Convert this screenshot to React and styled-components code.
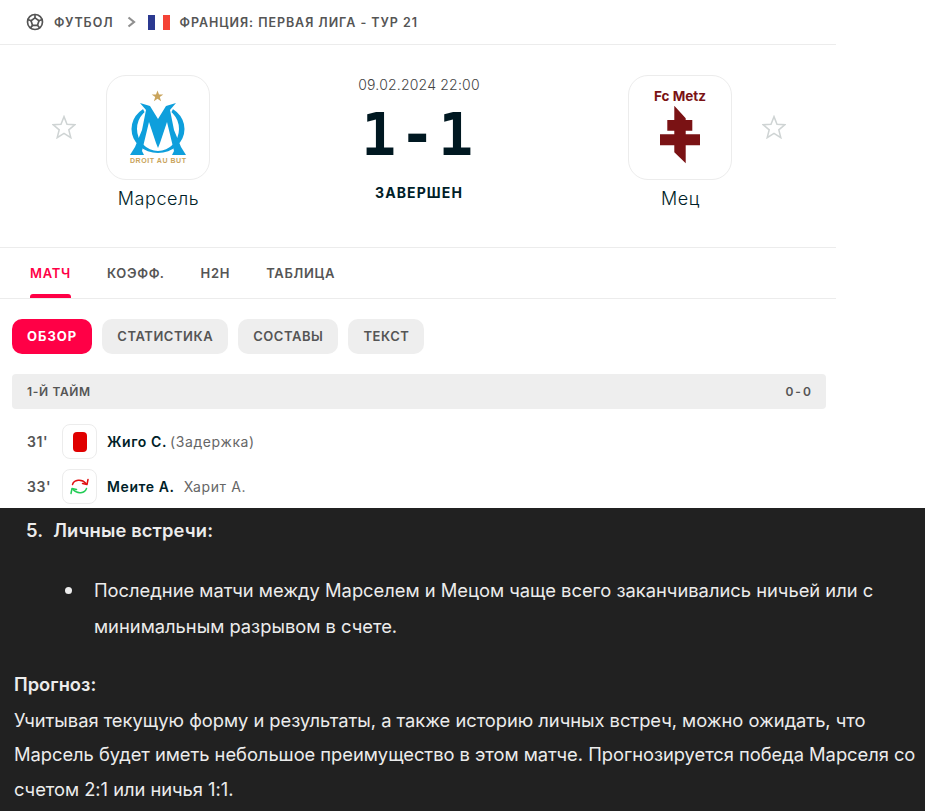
import React from 'react'
import styled, { createGlobalStyle } from 'styled-components'
import { TbBallFootball } from 'react-icons/tb'

const GlobalStyle = createGlobalStyle`
    html, body {
        margin: 0;
        padding: 0;
        background: #fff;
    }
    * {
        box-sizing: border-box;
    }
`

const Page = styled.div`
    width: 925px;
    height: 811px;
    overflow: hidden;
    display: flex;
    flex-direction: column;
    font-family: Inter, "Noto Sans", sans-serif;
`

const Widget = styled.div`
    width: 836px;
    height: 508px;
    flex: none;
    overflow: hidden;
    color: #001e28;
`

const Breadcrumb = styled.div`
    height: 45px;
    padding-left: 25px;
    display: flex;
    align-items: center;
    border-bottom: 1px solid #ececec;
    font-size: 12.5px;
    font-weight: 600;
    letter-spacing: 0.95px;
    color: #555;
    svg {
        flex: none;
    }
`

const CrumbText = styled.span`
    margin-left: ${p => p.$left}px;
`

const Chevron = styled.svg`
    width: 9px;
    height: 12px;
    margin-left: 13px;
`

const Flag = styled.div`
    width: 22px;
    height: 15px;
    margin-left: 12px;
    background: linear-gradient(90deg, #2b3990 33.3%, #fff 33.3%, #fff 66.6%, #f44336 66.6%);
`

const MatchHeader = styled.div`
    height: 203px;
    padding: 30px 50px 0 52px;
    display: flex;
    border-bottom: 1px solid #ececec;
`

const Team = styled.div`
    display: flex;
    align-items: flex-start;
    gap: 30px;
`

const StarBox = styled.div`
    width: 24px;
    height: 24px;
    margin-top: 40px;
    flex: none;
`

const TeamInfo = styled.div`
    width: 104px;
    display: flex;
    flex-direction: column;
    align-items: center;
`

const LogoBox = styled.div`
    width: 104px;
    height: 105px;
    border: 1px solid #ececec;
    border-radius: 20px;
    background: #fff;
`

const TeamName = styled.div`
    margin-top: 8px;
    padding-left: 1px;
    font-size: 18px;
    font-weight: 300;
    line-height: 22px;
    letter-spacing: 0.55px;
    white-space: nowrap;
`

const Center = styled.div`
    flex: 1;
    display: flex;
    flex-direction: column;
    align-items: center;
`

const DateText = styled.div`
    font-size: 14px;
    font-weight: 300;
    line-height: 20px;
    letter-spacing: 0.2px;
    color: #444;
`

const Score = styled.div`
    font-family: "DejaVu Sans Mono", monospace;
    font-size: 58px;
    font-weight: 700;
    line-height: 70px;
    margin-top: 5px;
    letter-spacing: 3.5px;
    color: #001821;
`

const Status = styled.div`
    margin-top: 14px;
    font-size: 14px;
    font-weight: 700;
    line-height: 18px;
    letter-spacing: 1.1px;
`

const Tabs = styled.div`
    height: 51px;
    padding-left: 12px;
    display: flex;
    border-bottom: 1px solid #ececec;
`

const Tab = styled.div`
    position: relative;
    padding: 0 18px;
    line-height: 50px;
    font-size: 13px;
    font-weight: 600;
    letter-spacing: 0.7px;
    color: ${p => (p.$active ? '#ff0046' : '#555')};
    ${p => p.$active && `
        &:after {
            content: '';
            position: absolute;
            left: 18px;
            right: 18px;
            bottom: 0;
            height: 4px;
            border-radius: 3px 3px 0 0;
            background: #ff0046;
        }
    `}
`

const Pills = styled.div`
    padding: 20px 12px;
    display: flex;
    gap: 10px;
`

const Pill = styled.div`
    height: 35px;
    padding: 0 15px;
    border-radius: 10px;
    line-height: 35px;
    font-size: 13px;
    font-weight: ${p => (p.$active ? 700 : 600)};
    letter-spacing: ${p => (p.$active ? '1px' : '0.55px')};
    color: ${p => (p.$active ? '#fff' : '#555')};
    background: ${p => (p.$active ? '#ff0046' : '#eee')};
`

const PeriodBar = styled.div`
    width: 814px;
    height: 35px;
    margin-left: 12px;
    padding: 0 15px;
    display: flex;
    align-items: center;
    justify-content: space-between;
    border-radius: 4px;
    background: #eee;
    font-size: 12px;
    font-weight: 600;
    letter-spacing: 0.65px;
    color: #555;
`

const PeriodScore = styled.span`
    letter-spacing: 0.2px;
    word-spacing: -1.5px;
`

const Events = styled.div`
    padding: 15px 0 0 27px;
    display: flex;
    flex-direction: column;
    gap: 10px;
`

const EventRow = styled.div`
    height: 35px;
    display: flex;
    align-items: center;
    font-size: 14px;
    letter-spacing: 0.6px;
`

const Minute = styled.div`
    width: 35px;
    font-weight: 600;
    color: #555;
`

const EventIcon = styled.div`
    width: 35px;
    height: 35px;
    margin-right: 10px;
    display: flex;
    align-items: center;
    justify-content: center;
    border: 1px solid #ececec;
    border-radius: 8px;
`

const RedCard = styled.div`
    width: 14px;
    height: 20px;
    border-radius: 4px;
    background: #e00000;
`

const Player = styled.span`
    font-weight: 600;
`

const Note = styled.span`
    margin-left: ${p => p.$left}px;
    color: #666;
`

const Answer = styled.div`
    flex: 1;
    padding: 4px 0 0 14px;
    overflow: hidden;
    background: #212121;
    color: #ececec;
    font-size: 18.33px;
    line-height: 36px;
`

const NumberedItem = styled.div`
    height: 42px;
    padding-left: 12px;
    display: flex;
    gap: 10px;
    font-weight: 600;
    letter-spacing: 0.15px;
`

const BulletItem = styled.div`
    position: relative;
    margin: 18px 0 23px;
    padding-left: 80px;
    &:before {
        content: '';
        position: absolute;
        left: 51px;
        top: 15px;
        width: 7px;
        height: 7px;
        border-radius: 50%;
        background: #ececec;
    }
`

const Paragraph = styled.div`
    line-height: 34.5px;
    letter-spacing: -0.03px;
    white-space: nowrap;
`

const Strong = styled.div`
    font-weight: 600;
    line-height: 35.5px;
`

const Star = () => (
    <svg width="24" height="24" viewBox="0 0 24 24" fill="none" stroke="#cfd4d4" strokeWidth="1.5">
        <path d="M12 1.600l3 7.600 8 .5-6.200 5.100 2 7.900L12 18.400l-6.800 4.300 2-7.900L1 9.700l8-.5z" />
    </svg>
)

const MarseilleLogo = () => (
    <svg width="102" height="103" viewBox="1 1 102 103">
        <path fill="#c9a45c" d="M51.500 15.500l1.500 4h4.300l-3.500 2.600 1.300 4.200-3.600-2.600-3.600 2.600 1.300-4.200-3.500-2.600h4.300z" />
        <path
            fill="#0e9fdc"
            fillRule="evenodd"
            d="M25.500 54a26.500 24 0 1 0 53 0a26.500 24 0 1 0-53 0zM31 54a21 22 0 1 1 42 0a21 22 0 1 1-42 0z"
        />
        <path fill="#fff" d="M35 30L69 30 64 40 40 40z" />
        <path
            fill="#0e9fdc"
            d="M34 28L44 31 52 44 60 31 70 28 64 35 68 55 75 72 80 80 66 80 68 76 61 47 54 68 52 73 50 68 43 47 36 76 38 80 24 80 29 72 36 55 40 35z"
        />
        <text x="52" y="87.500" textAnchor="middle" textLength="56" fontFamily="Liberation Sans, sans-serif" fontSize="7" fontWeight="700" fill="#c9a45c">DROIT AU BUT</text>
    </svg>
)

const MetzLogo = () => (
    <svg width="102" height="103" viewBox="1 1 102 103">
        <text x="52" y="26" textAnchor="middle" fontFamily="Inter, sans-serif" fontSize="13.500" fontWeight="700" fill="#7a1214">Fc Metz</text>
        <path fill="#7a1214" d="M46.300 30.700L57.700 43.300V45H64.300V55.700H57.700V59.300H72V70.300H57.700V88.300L46.300 77.300V70.300H32V59.300H46.300V55.700H39.300V45H46.300z" />
    </svg>
)

const SubIcon = () => (
    <svg width="21" height="21" viewBox="0 0 21 21" fill="none" strokeWidth="1.500" strokeLinecap="round" strokeLinejoin="round">
        <path stroke="#e01010" d="M3.500 8.500C5 3.800 12.500 2.500 17 7.500" />
        <path stroke="#e01010" d="M19 3.500L18 8.500L13.500 7.500" />
        <path stroke="#22cc55" d="M17.500 12.500C16 17.200 8.500 18.500 4 13.500" />
        <path stroke="#22cc55" d="M2 17.500L3 12.500L7.500 13.500" />
    </svg>
)

const App = () => {
    return (
        <Page>
            <GlobalStyle />
            <Widget>
                <Breadcrumb>
                    <TbBallFootball size={20} color="#555" />
                    <CrumbText $left={9}>ФУТБОЛ</CrumbText>
                    <Chevron viewBox="0 0 9 12" fill="none" stroke="#8f8f8f" strokeWidth="2.200">
                        <path d="M1.500 1.500L7 6L1.500 10.500" />
                    </Chevron>
                    <Flag />
                    <CrumbText $left={10}>ФРАНЦИЯ: ПЕРВАЯ ЛИГА - ТУР 21</CrumbText>
                </Breadcrumb>
                <MatchHeader>
                    <Team>
                        <StarBox><Star /></StarBox>
                        <TeamInfo>
                            <LogoBox><MarseilleLogo /></LogoBox>
                            <TeamName>Марсель</TeamName>
                        </TeamInfo>
                    </Team>
                    <Center>
                        <DateText>09.02.2024 22:00</DateText>
                        <Score>1-1</Score>
                        <Status>ЗАВЕРШЕН</Status>
                    </Center>
                    <Team>
                        <TeamInfo>
                            <LogoBox><MetzLogo /></LogoBox>
                            <TeamName>Мец</TeamName>
                        </TeamInfo>
                        <StarBox><Star /></StarBox>
                    </Team>
                </MatchHeader>
                <Tabs>
                    <Tab $active>МАТЧ</Tab>
                    <Tab>КОЭФФ.</Tab>
                    <Tab>H2H</Tab>
                    <Tab>ТАБЛИЦА</Tab>
                </Tabs>
                <Pills>
                    <Pill $active>ОБЗОР</Pill>
                    <Pill>СТАТИСТИКА</Pill>
                    <Pill>СОСТАВЫ</Pill>
                    <Pill>ТЕКСТ</Pill>
                </Pills>
                <PeriodBar>
                    <span>1-Й ТАЙМ</span>
                    <PeriodScore>0 - 0</PeriodScore>
                </PeriodBar>
                <Events>
                    <EventRow>
                        <Minute>31'</Minute>
                        <EventIcon><RedCard /></EventIcon>
                        <Player>Жиго С.</Player>
                        <Note $left={3}>(Задержка)</Note>
                    </EventRow>
                    <EventRow>
                        <Minute>33'</Minute>
                        <EventIcon><SubIcon /></EventIcon>
                        <Player>Меите А.</Player>
                        <Note $left={9}>Харит А.</Note>
                    </EventRow>
                </Events>
            </Widget>
            <Answer>
                <NumberedItem>
                    <span>5.</span>
                    <span>Личные встречи:</span>
                </NumberedItem>
                <BulletItem>
                    Последние матчи между Марселем и Мецом чаще всего заканчивались ничьей или с<br />
                    минимальным разрывом в счете.
                </BulletItem>
                <Strong>Прогноз:</Strong>
                <Paragraph>
                    Учитывая текущую форму и результаты, а также историю личных встреч, можно ожидать, что<br />
                    Марсель будет иметь небольшое преимущество в этом матче. Прогнозируется победа Марселя со<br />
                    счетом 2:1 или ничья 1:1.
                </Paragraph>
            </Answer>
        </Page>
    )
}

export default App
